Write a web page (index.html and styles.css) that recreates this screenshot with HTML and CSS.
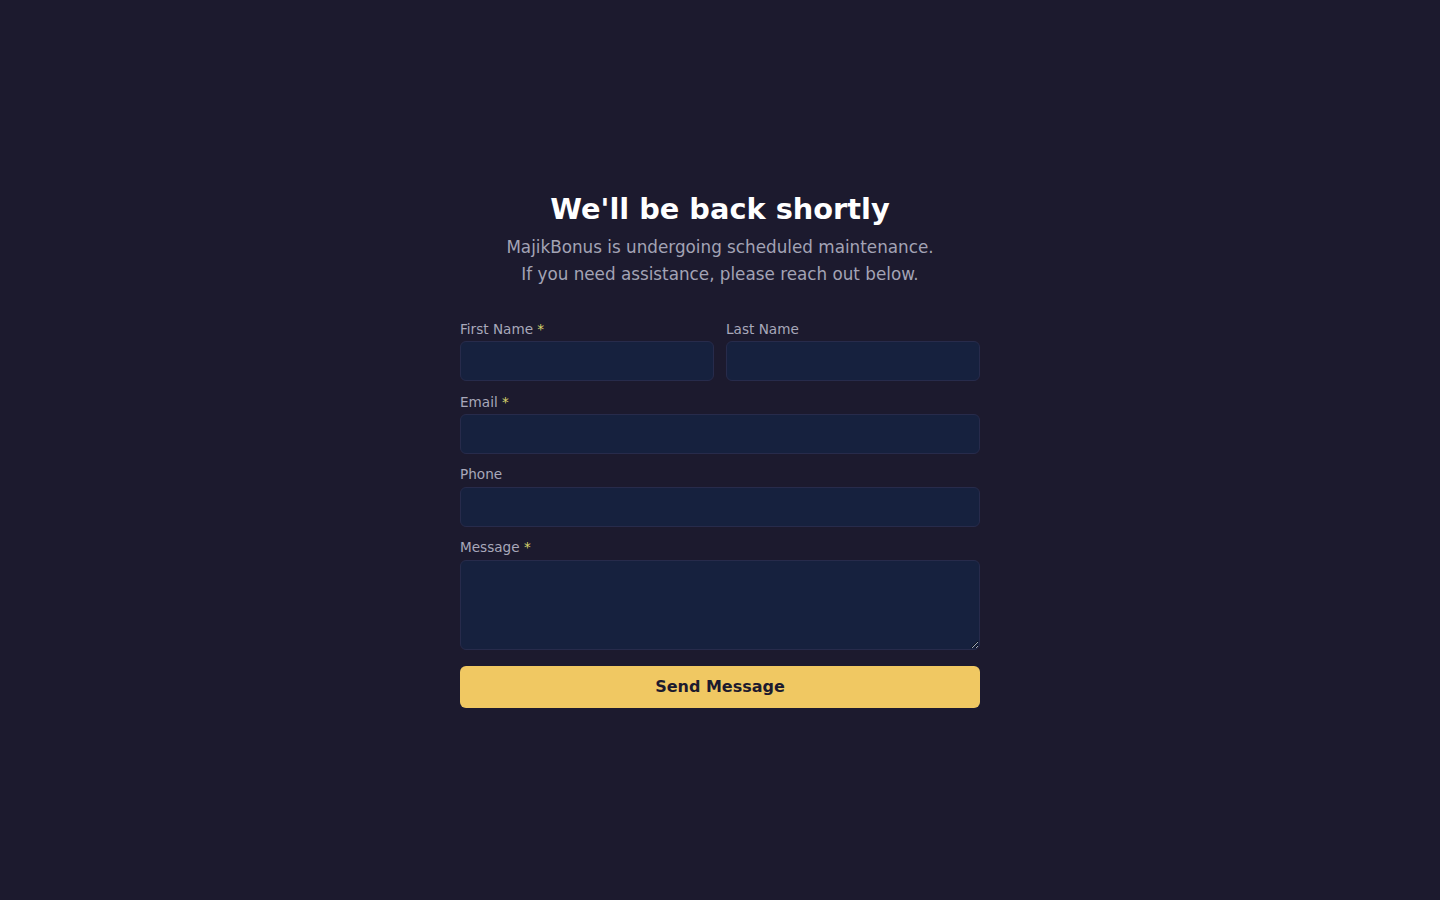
FILE: index.html
```html
<!DOCTYPE html>
<html lang="en">
<head>
    <meta charset="UTF-8">
    <meta name="viewport" content="width=device-width, initial-scale=1.0">
    <title>MajikBonus - Maintenance</title>
    <link rel="stylesheet" href="styles.css">
</head>
<body>
    <div class="wrapper">
        <div class="maintenance">
            <h1>We'll be back shortly</h1>
            <p class="intro">MajikBonus is undergoing scheduled maintenance.<br>If you need assistance, please reach out below.</p>

            <form class="contact-form" onsubmit="return false;">
                <div class="row">
                    <div class="field">
                        <label for="firstName">First Name <span class="req">*</span></label>
                        <input type="text" id="firstName">
                    </div>
                    <div class="field">
                        <label for="lastName">Last Name</label>
                        <input type="text" id="lastName">
                    </div>
                </div>
                <div class="field">
                    <label for="email">Email <span class="req">*</span></label>
                    <input type="email" id="email">
                </div>
                <div class="field">
                    <label for="phone">Phone</label>
                    <input type="tel" id="phone">
                </div>
                <div class="field">
                    <label for="message">Message <span class="req">*</span></label>
                    <textarea id="message"></textarea>
                </div>
                <button type="submit" class="send-button">Send Message</button>
            </form>
        </div>
    </div>
</body>
</html>
```

FILE: styles.css
```css
body {
    font-family: "DejaVu Sans", Verdana, sans-serif;
    background-color: #1c1a2e;
    color: #fff;
    margin: 0;
}
.wrapper {
    min-height: 100vh;
    display: flex;
    align-items: center;
    justify-content: center;
}
.maintenance {
    width: 520px;
    text-align: center;
}
h1 {
    font-size: 28.8px;
    font-weight: bold;
    margin: 0 0 7.3px;
    line-height: 34.5px;
}
.intro {
    font-size: 16.8px;
    line-height: 27px;
    color: #a3a3b5;
    margin: 0 0 32.6px;
}
.contact-form {
    text-align: left;
}
.row {
    display: flex;
    gap: 12px;
}
.row .field {
    flex: 1;
}
.field {
    margin-bottom: 12.5px;
}
.field label {
    display: block;
    font-size: 13.6px;
    line-height: 16.32px;
    color: #a8a8ba;
    margin-bottom: 4px;
}
.req {
    color: #d8d46c;
}
.field input,
.field textarea {
    display: block;
    width: 100%;
    box-sizing: border-box;
    height: 40px;
    background-color: #16213e;
    border: 1px solid #272b4b;
    border-radius: 6px;
    color: #fff;
    font-family: inherit;
    font-size: 14px;
    padding: 8px 12px;
}
.field textarea {
    height: 90px;
    resize: vertical;
}
.send-button {
    display: block;
    width: 100%;
    height: 42px;
    margin-top: 16px;
    background-color: #f0c862;
    color: #1c1a2e;
    border: none;
    border-radius: 6px;
    font-family: inherit;
    font-size: 16px;
    font-weight: bold;
    cursor: pointer;
}
```
